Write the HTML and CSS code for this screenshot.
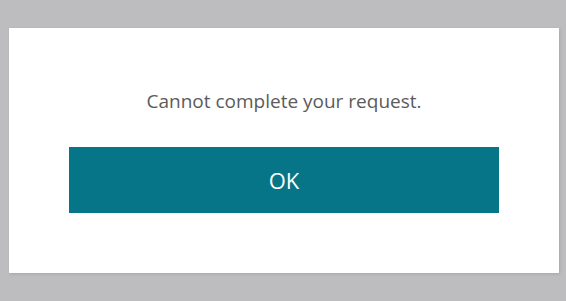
FILE: index.html
```html
<!DOCTYPE html>
<html lang="en">
<head>
    <meta charset="UTF-8">
    <title>Error</title>
    <link rel="stylesheet" href="styles.css">
</head>
<body>
    <div class="dialog">
        <p class="message">Cannot complete your request.</p>
        <button class="ok-btn">OK</button>
    </div>
</body>
</html>
```

FILE: styles.css
```css
body {
    margin: 0;
    height: 301px;
    background: #bdbcbe;
    font-family: "Open Sans", "Noto Sans", sans-serif;
    padding: 28px 7px 0 9px;
    box-sizing: border-box;
}

.dialog {
    background: #fff;
    width: 550px;
    height: 245px;
    box-sizing: border-box;
    padding: 0 60px;
    display: flex;
    flex-direction: column;
    align-items: center;
    box-shadow: 1px 1px 3px rgba(0, 0, 0, 0.12);
}

.message {
    margin: 58px 0 0;
    font-size: 19px;
    line-height: 30px;
    color: #5b5b5b;
}

.ok-btn {
    margin-top: 31px;
    width: 430px;
    height: 66px;
    border: none;
    background: #067587;
    color: #fff;
    font-family: inherit;
    font-size: 22px;
    padding: 0;
    cursor: pointer;
}
```
